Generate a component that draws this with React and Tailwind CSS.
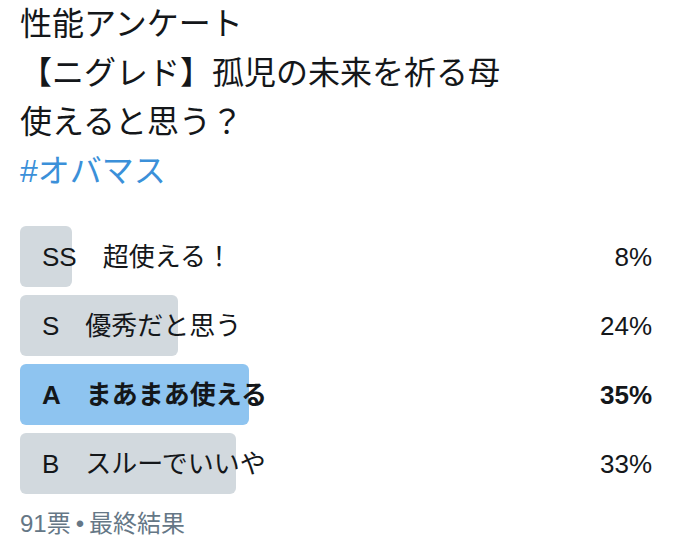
const options = [
  { code: 'SS', label: '超使える！', percent: 8, width: 52 },
  { code: 'S', label: '優秀だと思う', percent: 24, width: 158 },
  { code: 'A', label: 'まあまあ使える', percent: 35, width: 229, winner: true },
  { code: 'B', label: 'スルーでいいや', percent: 33, width: 216 },
]

function PollRow({ option }) {
  return (
    <div className="relative flex h-[61px] items-center">
      <div
        className={`absolute left-0 top-0 h-full rounded-md ${option.winner ? 'bg-[#8ec4f0]' : 'bg-[#d2d9de]'}`}
        style={{ width: option.width }}
      />
      <span className={`relative pl-[22px] text-[26px] leading-none text-[#14171a] ${option.winner ? 'font-bold' : ''}`}>
        {option.code}　{option.label}
      </span>
      <span className={`relative ml-auto pr-2 text-[26px] leading-none text-[#14171a] ${option.winner ? 'font-bold' : ''}`}>
        {option.percent}%
      </span>
    </div>
  )
}

export default function App() {
  return (
    <div
      className="h-[551px] w-[680px] overflow-hidden bg-white px-5"
      style={{ fontFamily: '"Liberation Sans", "Noto Sans CJK JP", sans-serif' }}
    >
      <p className="text-[32px] leading-[49px] text-[#14171a]">
        性能アンケート
        <br />
        【ニグレド】孤児の未来を祈る母
        <br />
        使えると思う？
        <br />
        <span className="text-[#3b90d9]">#オバマス</span>
      </p>

      <div className="mt-[30px] flex w-[640px] flex-col gap-2">
        {options.map((option) => (
          <PollRow key={option.code} option={option} />
        ))}
      </div>

      <p className="mt-[15px] text-[24px] leading-[30px] text-[#657786]">
        91票<span className="mx-[5px]">•</span>最終結果
      </p>
    </div>
  )
}
